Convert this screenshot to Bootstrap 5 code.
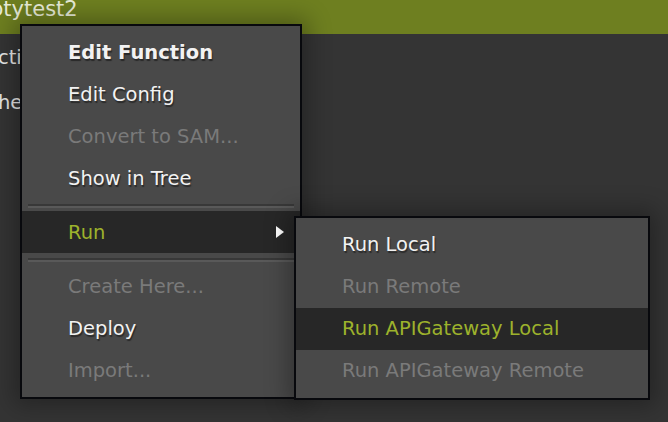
<!doctype html>
<html><head><meta charset="utf-8">
<link href="https://cdn.jsdelivr.net/npm/bootstrap@5.3.0/dist/css/bootstrap.min.css" rel="stylesheet">
<style>
html,body{height:100%;margin:0;overflow:hidden}
body{background:#343434;font-family:"DejaVu Sans",sans-serif;font-size:19.5px;color:#e6e6e6;position:relative;width:668px;height:422px}
.titlebar{height:34px;background:#6e7f20;color:#e8ecd8;font-size:21px;line-height:20px;white-space:nowrap;overflow:hidden}
.titlebar span{display:block;margin-top:-1px;margin-left:-10px}
.bgline{white-space:nowrap;line-height:24px;height:45px;margin-left:-2px}
.bgwrap{padding-top:12px}
.ctx.dropdown-menu{display:block;position:absolute;background:#494949;border:2px solid #08090d;border-radius:0;padding:5px 0 5px;margin:0;font-size:19.5px;box-shadow:0 0 22px 6px rgba(0,0,0,.3);min-width:0}
.ctx1{left:20px;top:24px;width:282px;height:375px}
.ctx2{left:294px;top:216px;width:356px;height:184px;padding-top:6px!important}
.ctx .dropdown-item{height:42px;line-height:44px;padding:0 0 0 46px;color:#f2f2f2;text-shadow:1px 2px 1px rgba(0,0,0,.45);position:relative;background:transparent;white-space:nowrap}
.ctx2 .dropdown-item{line-height:42px}
.ctx .dropdown-item.disabled{color:#7a7a7a;text-shadow:none}
.ctx .dropdown-item.active{background:#272727;color:#9db22c;text-shadow:none}
.ctx .dropdown-item.strong{font-weight:700}
.ctx .dropdown-divider{margin:5px 6px 3px;height:4px;border:0;border-top:2px solid #383838;border-bottom:2px solid #595959;opacity:1}
.arrow{position:absolute;right:16px;top:15px;width:0;height:0;border-left:8px solid #fff;border-top:6px solid transparent;border-bottom:6px solid transparent}
</style></head>
<body>
<div class="titlebar"><span>ptytest2</span></div>
<div class="bgwrap"><div class="bgline">ctio</div><div class="bgline">he</div></div>
<ul class="dropdown-menu ctx ctx1 list-unstyled">
<li><a class="dropdown-item strong">Edit Function</a></li>
<li><a class="dropdown-item">Edit Config</a></li>
<li><a class="dropdown-item disabled">Convert to SAM...</a></li>
<li><a class="dropdown-item">Show in Tree</a></li>
<li><hr class="dropdown-divider"></li>
<li><a class="dropdown-item active">Run<i class="arrow"></i></a></li>
<li><hr class="dropdown-divider"></li>
<li><a class="dropdown-item disabled">Create Here...</a></li>
<li><a class="dropdown-item">Deploy</a></li>
<li><a class="dropdown-item disabled">Import...</a></li>
</ul>
<ul class="dropdown-menu ctx ctx2 list-unstyled">
<li><a class="dropdown-item">Run Local</a></li>
<li><a class="dropdown-item disabled">Run Remote</a></li>
<li><a class="dropdown-item active">Run APIGateway Local</a></li>
<li><a class="dropdown-item disabled">Run APIGateway Remote</a></li>
</ul>
<script src="https://cdn.jsdelivr.net/npm/bootstrap@5.3.0/dist/js/bootstrap.bundle.min.js"></script>
</body></html>
